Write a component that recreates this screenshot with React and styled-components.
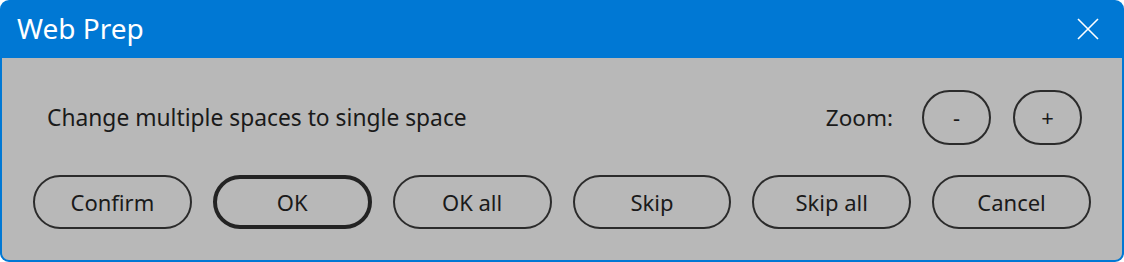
import React from 'react';
import styled, { createGlobalStyle } from 'styled-components';

const GlobalStyle = createGlobalStyle`
  html, body {
    margin: 0;
    padding: 0;
    background: #ffffff;
  }
  body {
    font-family: "Noto Sans", "Open Sans", sans-serif;
  }
`;

const Window = styled.div`
  width: 1124px;
  height: 262px;
  box-sizing: border-box;
  background: #0078d4;
  border-radius: 9px;
  padding: 0 2px 2px;
  display: flex;
  flex-direction: column;
  overflow: hidden;
`;

const TitleBar = styled.div`
  height: 58px;
  flex: none;
  display: flex;
  align-items: center;
  justify-content: space-between;
  padding: 0 23px 0 15px;
  color: #ffffff;
`;

const Title = styled.div`
  font-size: 28px;
  line-height: 1;
  padding-bottom: 2px;
`;

const CloseButton = styled.button`
  border: none;
  background: none;
  padding: 0;
  width: 22px;
  height: 22px;
  display: flex;
  align-items: center;
  justify-content: center;
  cursor: pointer;
`;

const Body = styled.div`
  flex: 1;
  background: #b8b8b8;
  border-radius: 0 0 7px 7px;
  padding: 32px 31px 0;
  display: flex;
  flex-direction: column;
  gap: 30px;
`;

const Row = styled.div`
  display: flex;
  align-items: center;
  justify-content: ${p => p.$spread ? 'space-between' : 'flex-start'};
  gap: ${p => p.$gap || 0}px;
`;

const Message = styled.div`
  font-size: 22.8px;
  color: #1a1a1a;
  padding-left: 14px;
`;

const ZoomGroup = styled.div`
  display: flex;
  align-items: center;
  gap: 22px;
  padding-right: 9px;
`;

const ZoomLabel = styled.span`
  font-size: 22.5px;
  color: #1a1a1a;
  margin-right: 7px;
`;

const PillButton = styled.button`
  box-sizing: border-box;
  width: ${p => p.$width || 159}px;
  height: ${p => p.$height || 54}px;
  border-radius: 28px;
  border: ${p => p.$primary ? '4px solid #232323' : '2px solid #2b2b2b'};
  background: transparent;
  font-family: "Noto Sans", "Open Sans", sans-serif;
  font-size: 22px;
  color: #1a1a1a;
  padding: 0 0 1px;
  cursor: pointer;
`;

const actions = ['Confirm', 'OK', 'OK all', 'Skip', 'Skip all', 'Cancel'];

export default function App() {
  return (
    <>
      <GlobalStyle />
      <Window>
        <TitleBar>
          <Title>Web Prep</Title>
          <CloseButton aria-label="Close">
            <svg width="22" height="22" viewBox="0 0 22 22">
              <path d="M1 1 L21 21 M21 1 L1 21" stroke="#ffffff" strokeWidth="1.6" fill="none" />
            </svg>
          </CloseButton>
        </TitleBar>
        <Body>
          <Row $spread>
            <Message>Change multiple spaces to single space</Message>
            <ZoomGroup>
              <ZoomLabel>Zoom:</ZoomLabel>
              <PillButton $width={69} $height={55}>-</PillButton>
              <PillButton $width={69} $height={55}>+</PillButton>
            </ZoomGroup>
          </Row>
          <Row $gap={21}>
            {actions.map(label => (
              <PillButton key={label} $primary={label === 'OK'}>{label}</PillButton>
            ))}
          </Row>
        </Body>
      </Window>
    </>
  );
}
